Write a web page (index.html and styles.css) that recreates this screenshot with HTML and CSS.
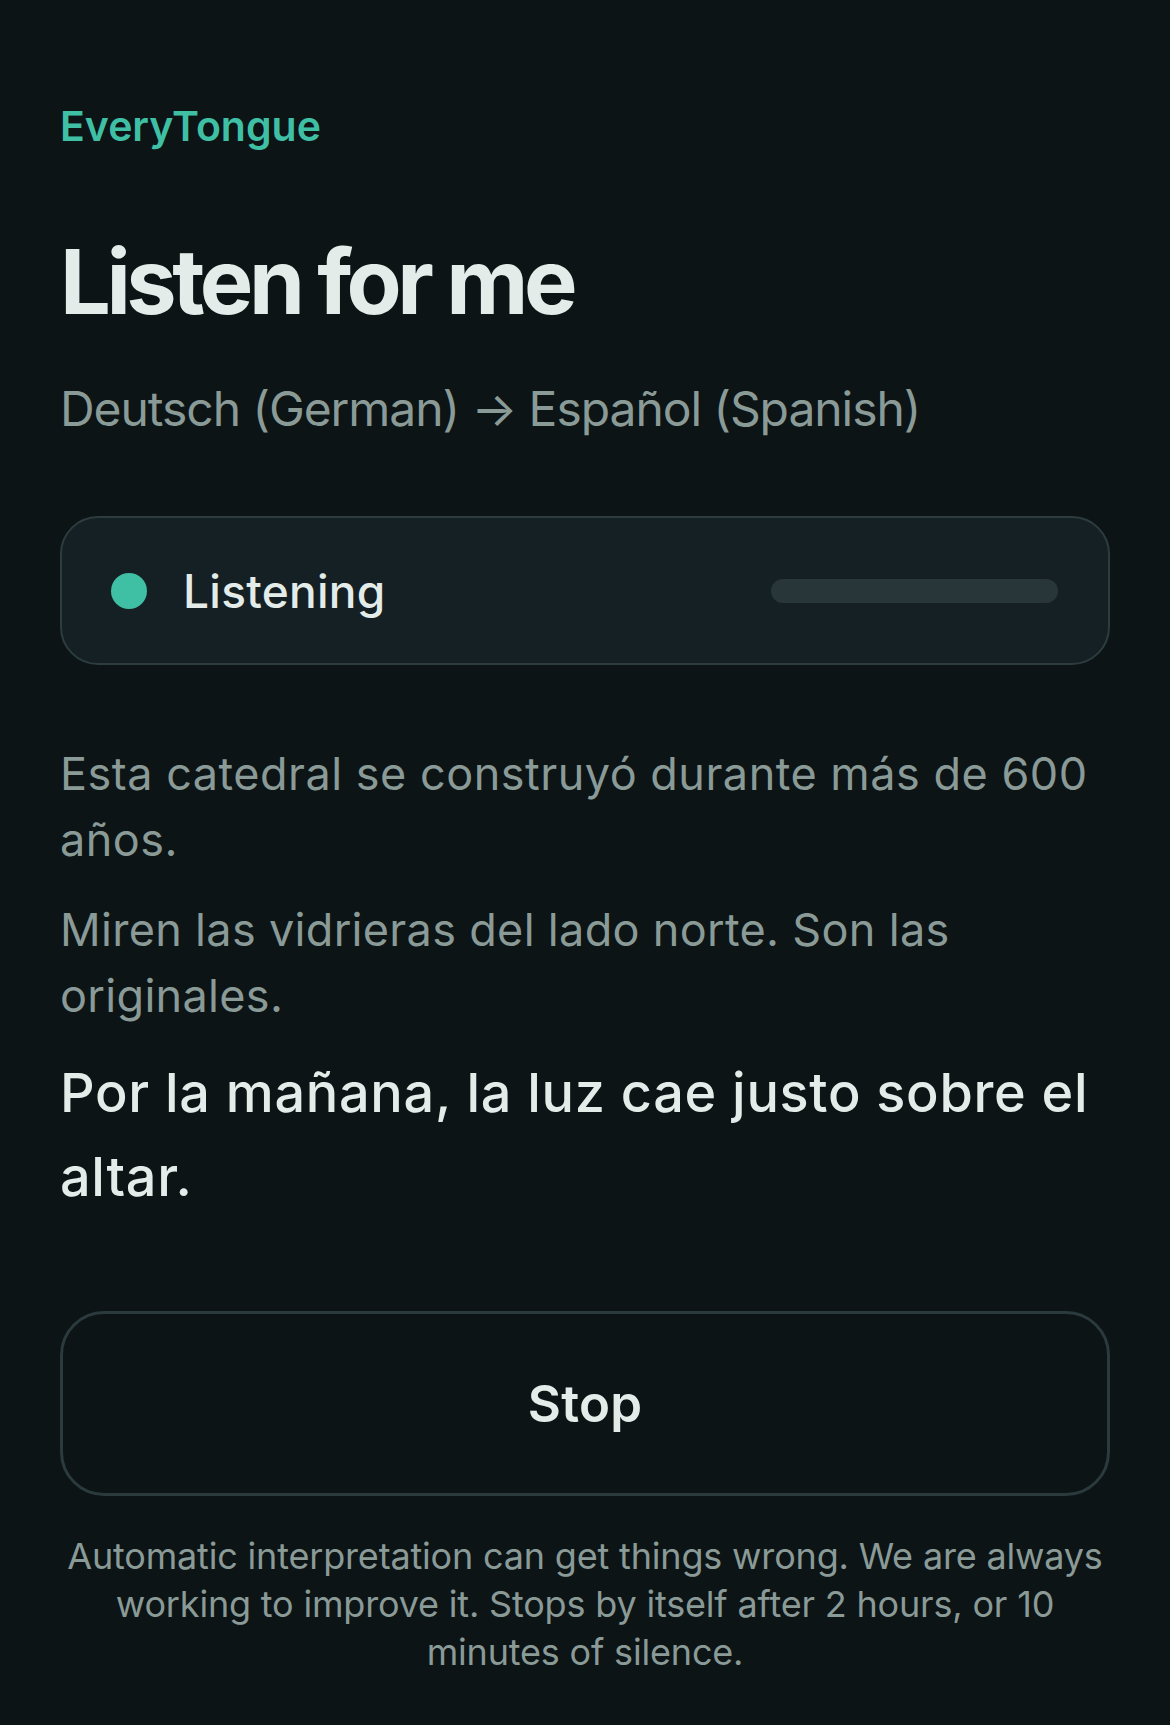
FILE: index.html
```html
<!DOCTYPE html>
<html lang="es">
<head>
<meta charset="utf-8">
<title>EveryTongue — Listen for me</title>
<link rel="stylesheet" href="styles.css">
</head>
<body>
<main class="screen">
  <div class="brand">EveryTongue</div>
  <h1 class="title">Listen for me</h1>
  <p class="langs">Deutsch (German) → Español (Spanish)</p>

  <section class="status">
    <span class="dot"></span>
    <span class="status-label">Listening</span>
    <span class="level"></span>
  </section>

  <section class="transcript">
    <p class="line">Esta catedral se construyó durante más de 600 años.</p>
    <p class="line second">Miren las vidrieras del lado norte. Son las originales.</p>
    <p class="line current">Por la mañana, la luz cae justo sobre el altar.</p>
  </section>

  <button class="stop" type="button">Stop</button>

  <p class="note">Automatic interpretation can get things wrong. We are always working to improve it. Stops by itself after 2 hours, or 10 minutes of silence.</p>
</main>
</body>
</html>
```

FILE: styles.css
```css
* { box-sizing: border-box; }

html, body {
  margin: 0;
  padding: 0;
  background: #0c1416;
}

body {
  font-family: Inter, "Noto Sans", "Liberation Sans", sans-serif;
  color: #e3ece9;
  width: 1170px;
  min-height: 1725px;
}

.screen {
  padding: 101px 60px 40px;
  display: flex;
  flex-direction: column;
}

.brand {
  font-size: 41px;
  line-height: 50px;
  font-weight: 600;
  color: #3fbfa4;
  letter-spacing: 0;
}

.title {
  margin: 81px 0 0;
  font-size: 90px;
  line-height: 100px;
  font-weight: 700;
  letter-spacing: -0.05em;
  color: #e3ece9;
}

.langs {
  margin: 47px 0 0;
  font-size: 48px;
  line-height: 60px;
  font-weight: 400;
  color: #8a9a97;
  letter-spacing: -0.022em;
}

.status {
  margin-top: 77px;
  height: 149px;
  border: 2px solid #2c3c3f;
  border-radius: 38px;
  background: #152024;
  display: flex;
  align-items: center;
  padding: 0 50px 0 49px;
  gap: 36px;
}

.dot {
  width: 36px;
  height: 36px;
  border-radius: 50%;
  background: #3fbfa4;
  flex: none;
}

.status-label {
  font-size: 46px;
  font-weight: 500;
  color: #e3ece9;
  flex: 1;
  letter-spacing: 0.006em;
}

.level {
  width: 287px;
  height: 24px;
  border-radius: 12px;
  background: #28363a;
  flex: none;
}

.transcript {
  margin-top: 76px;
  display: flex;
  flex-direction: column;
}

.line {
  margin: 0;
  font-size: 45px;
  line-height: 66px;
  color: #8a9a97;
  letter-spacing: 0.011em;
}

.line.second {
  margin-top: 24px;
  letter-spacing: 0.007em;
}

.line.current {
  margin-top: 22px;
  font-size: 54px;
  line-height: 84px;
  font-weight: 500;
  color: #e3ece9;
  letter-spacing: 0.013em;
}

.stop {
  margin-top: 92px;
  height: 185px;
  width: 100%;
  border: 3px solid #2a3a3d;
  border-radius: 44px;
  background: transparent;
  font-family: inherit;
  font-size: 51px;
  font-weight: 600;
  color: #e3ece9;
  letter-spacing: 0.005em;
  cursor: pointer;
}

.note {
  margin: 36px 0 0;
  text-align: center;
  font-size: 36px;
  line-height: 48px;
  color: #8a9a97;
  letter-spacing: -0.005em;
}
```
